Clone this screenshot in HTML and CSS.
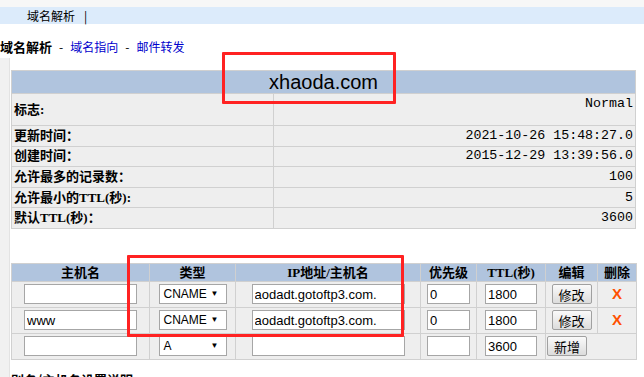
FILE: index.html
```html
<!DOCTYPE html>
<html lang="zh-CN">
<head>
    <meta charset="UTF-8">
    <meta name="viewport" content="width=device-width, initial-scale=1.0">
    <title>域名解析</title>
    <link rel="stylesheet" href="styles.css">
</head>
<body>
    <div class="top-gap"></div>
    <div class="nav">域名解析<span class="bar">|</span></div>
    <div class="crumbs">
        <b>域名解析</b><span class="sep">-</span><a href="#">域名指向</a><span class="sep">-</span><a href="#">邮件转发</a>
    </div>

    <div class="main">
        <div class="strip"></div>
        <div class="content">
            <table class="info">
                <colgroup><col class="c-label"><col></colgroup>
                <tr><th colspan="2">xhaoda.com</th></tr>
                <tr class="first"><td class="label">标志:</td><td class="value top">Normal</td></tr>
                <tr><td class="label">更新时间：</td><td class="value">2021-10-26 15:48:27.0</td></tr>
                <tr><td class="label">创建时间：</td><td class="value">2015-12-29 13:39:56.0</td></tr>
                <tr><td class="label">允许最多的记录数：</td><td class="value">100</td></tr>
                <tr><td class="label">允许最小的TTL(秒):</td><td class="value">5</td></tr>
                <tr><td class="label">默认TTL(秒)：</td><td class="value">3600</td></tr>
            </table>

            <table class="records">
                <colgroup>
                    <col class="c-host"><col class="c-type"><col class="c-ip"><col class="c-pri">
                    <col class="c-ttl"><col class="c-edit"><col class="c-del">
                </colgroup>
                <tr>
                    <th>主机名</th><th>类型</th><th>IP地址/主机名</th><th>优先级</th>
                    <th>TTL(秒)</th><th>编辑</th><th>删除</th>
                </tr>
                <tr>
                    <td><input class="in-host" type="text" value=""></td>
                    <td><div class="select"><span>CNAME</span><span class="arrow">▼</span></div></td>
                    <td><input class="in-ip" type="text" value="aodadt.gotoftp3.com."></td>
                    <td><input class="in-pri" type="text" value="0"></td>
                    <td><input class="in-ttl" type="text" value="1800"></td>
                    <td><button class="btn">修改</button></td>
                    <td><span class="del">X</span></td>
                </tr>
                <tr>
                    <td><input class="in-host" type="text" value="www"></td>
                    <td><div class="select"><span>CNAME</span><span class="arrow">▼</span></div></td>
                    <td><input class="in-ip" type="text" value="aodadt.gotoftp3.com."></td>
                    <td><input class="in-pri" type="text" value="0"></td>
                    <td><input class="in-ttl" type="text" value="1800"></td>
                    <td><button class="btn">修改</button></td>
                    <td><span class="del">X</span></td>
                </tr>
                <tr>
                    <td><input class="in-host" type="text" value=""></td>
                    <td><div class="select"><span>A</span><span class="arrow">▼</span></div></td>
                    <td><input class="in-ip" type="text" value=""></td>
                    <td><input class="in-pri" type="text" value=""></td>
                    <td><input class="in-ttl" type="text" value="3600"></td>
                    <td colspan="2" class="add-cell"><button class="btn">新增</button></td>
                </tr>
            </table>

            <div class="note">别名/主机名设置说明</div>
        </div>
    </div>

    <div class="mark mark-domain"></div>
    <div class="mark mark-records"></div>
</body>
</html>
```

FILE: styles.css
```css
html, body {
    margin: 0;
    padding: 0;
}

body {
    position: relative;
    height: 377px;
    overflow: hidden;
    background: #fff;
    color: #000;
    font-family: "Noto Sans CJK SC", sans-serif;
    font-size: 12px;
    line-height: 14px;
}

.top-gap {
    height: 7px;
    background: #f7f7f7;
}

.nav {
    height: 17px;
    line-height: 17px;
    padding-left: 27px;
    background: #dcebfb;
}

.nav .bar {
    margin-left: 9px;
}

.crumbs {
    margin-top: 16px;
    height: 14px;
    white-space: nowrap;
}

.crumbs b {
    font-size: 13px;
}

.crumbs a {
    color: #0000cc;
    text-decoration: none;
}

.crumbs .sep {
    margin: 0 7px;
}

.main {
    display: flex;
    margin-top: 4px;
}

.strip {
    width: 9px;
    height: 330px;
    background: #f1f1f1;
    border-right: 1px solid #e3e3e3;
}

.content {
    margin-left: 1px;
    width: 625px;
}

table {
    width: 625px;
    border-collapse: collapse;
    table-layout: fixed;
}

th, td {
    border: 1px solid #d0d0d0;
    padding: 0;
}

th {
    background: #b0c4de;
}

td {
    background: #eeeeee;
}

/* 域名信息 */
.info {
    margin-top: 12px;
}

.info .c-label {
    width: 262px;
}

.info th {
    height: 22px;
    font-family: "Liberation Sans", sans-serif;
    font-size: 20px;
    font-weight: normal;
    line-height: 22px;
}

.info td {
    height: 19.6px;
}

.info .first td {
    height: 31px;
}

.info .first td.top {
    height: 28px;
}

.label {
    padding-left: 2px;
    font-family: "Liberation Serif", "Noto Sans CJK SC", serif;
    font-size: 13px;
    font-weight: bold;
}

.value {
    padding-right: 2px;
    text-align: right;
    font-family: "Liberation Mono", monospace;
    font-size: 13.3px;
}

.value.top {
    vertical-align: top;
    padding-top: 3px;
}

/* 解析记录 */
.records {
    margin-top: 34px;
}

.c-host { width: 138px; }
.c-type { width: 86px; }
.c-ip { width: 185px; }
.c-pri { width: 56px; }
.c-ttl { width: 69px; }
.c-edit { width: 52px; }
.c-del { width: 39px; }

.records th {
    height: 17px;
    font-family: "Liberation Serif", "Noto Sans CJK SC", serif;
    font-size: 13px;
    line-height: 15px;
}

.records td {
    height: 25px;
    text-align: center;
    vertical-align: middle;
}

input {
    box-sizing: border-box;
    height: 20px;
    margin: 0;
    padding: 0 2px;
    border: 1px solid #a6a6a6;
    background: #fff;
    font-family: "Liberation Sans", sans-serif;
    font-size: 13px;
    vertical-align: middle;
}

.in-host { width: 113px; }
.in-ip { width: 153px; }
.in-pri { width: 43px; }
.in-ttl { width: 52px; }

.select {
    box-sizing: border-box;
    display: flex;
    justify-content: space-between;
    align-items: center;
    width: 68px;
    height: 20px;
    margin: 0 auto;
    padding: 0 7px 0 4px;
    border: 1px solid #a6a6a6;
    background: #fff;
    font-family: "Liberation Sans", sans-serif;
    font-size: 12px;
    text-align: left;
}

.select .arrow {
    font-size: 8px;
}

.btn {
    box-sizing: border-box;
    width: 40px;
    height: 20px;
    margin: 0;
    padding: 0;
    border: 1px solid #a0a0a0;
    border-radius: 2px;
    background: linear-gradient(#fafafa, #dcdcdc);
    font-family: "Noto Sans CJK SC", sans-serif;
    font-size: 13px;
    line-height: 17px;
    vertical-align: middle;
}

.add-cell {
    text-align: left !important;
    padding-left: 1px;
}

.del {
    color: #ff5000;
    font-family: "Liberation Sans", sans-serif;
    font-size: 15px;
    font-weight: bold;
}

.note {
    margin-top: 13px;
    font-size: 13px;
    font-weight: bold;
}

/* 标注框 */
.mark {
    position: absolute;
    border: 3px solid #ff2222;
    border-radius: 1px;
}

.mark-domain {
    left: 222px;
    top: 52px;
    width: 168px;
    height: 46px;
}

.mark-records {
    left: 127px;
    top: 255px;
    width: 271px;
    height: 76px;
}
```
